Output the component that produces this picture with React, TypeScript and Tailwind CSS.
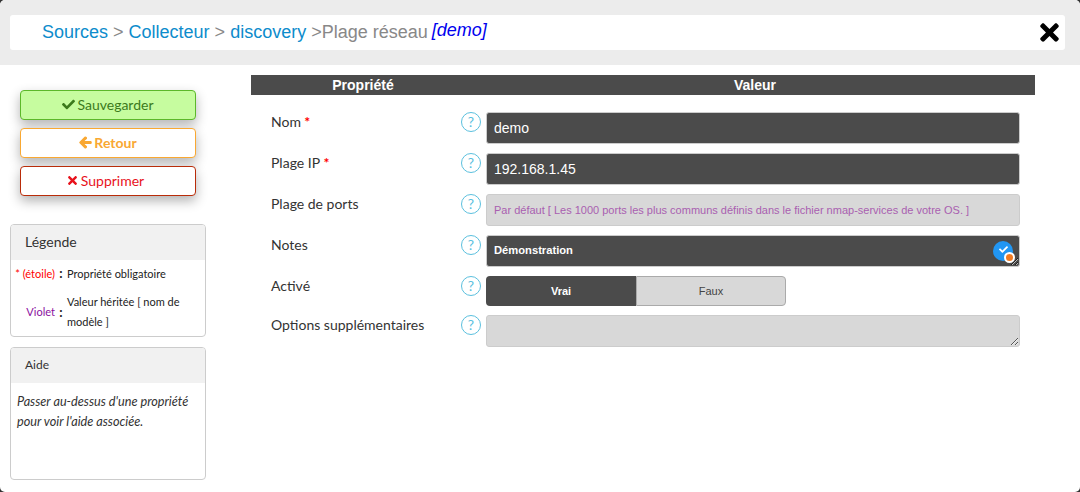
import React from 'react';
import { FaCheck, FaArrowLeft, FaTimes } from 'react-icons/fa';

const HelpIcon = () => (
  <div className="w-5 h-5 flex-shrink-0 rounded-full border-[1.5px] border-[#5bc0de] bg-white text-[#5bc0de] flex items-center justify-center text-[14px] leading-none font-['Lato',sans-serif]">
    ?
  </div>
);

const Row = ({ label, required, gap, children }: { label: string; required?: boolean; gap: string; children: React.ReactNode }) => (
  <div className={`flex ${gap}`}>
    <div className="w-[190px] pt-[1px] text-[14px] leading-[18px] text-[#333] font-['Lato',sans-serif]">
      {label}
      {required && <span className="text-[#ff0000] font-bold"> *</span>}
    </div>
    <div className="w-5 mr-[5px]">
      <HelpIcon />
    </div>
    {children}
  </div>
);

export default function App() {
  return (
    <div className="w-[1080px] h-[492px] bg-[#333333]">
      <div className="w-full h-full bg-white rounded-[5px] overflow-hidden font-['Lato',sans-serif]">
        <div className="h-[65px] bg-[#ececec] pt-[15px] px-[10px] pr-[15px]">
          <div className="relative h-[35px] bg-white rounded-[3px] pl-8 flex items-center text-[18px] font-['Liberation_Sans',sans-serif] text-[#888]">
            <span className="text-[#0d8ccc]">Sources</span>
            <span className="ml-[5px]">&gt;</span>
            <span className="ml-[5px] text-[#0d8ccc]">Collecteur</span>
            <span className="ml-[5px]">&gt;</span>
            <span className="ml-[5px] text-[#0d8ccc]">discovery</span>
            <span className="ml-[5px]">&gt;Plage réseau</span>
            <span className="ml-[4px] -mt-[5px] italic text-[18px] text-[#0000ee]">[demo]</span>
            <FaTimes className="absolute right-[2px] top-[4px] text-black" size={27} />
          </div>
        </div>

        <div className="flex">
          <div className="w-[196px] ml-[10px] flex-shrink-0">
            <div className="pt-[25px] pl-[10px] pr-[10px] flex flex-col gap-2">
              <button className="h-[30px] pb-[2px] flex items-center justify-center gap-[2px] rounded-[4px] border border-[#5cb82a] bg-[#c6fc9f] text-[14px] text-[#3c7a1c] shadow-[0_5px_12px_rgba(0,0,0,0.3)]">
                <FaCheck size={13} /> Sauvegarder
              </button>
              <button className="h-[30px] pb-[2px] flex items-center justify-center gap-[2px] rounded-[4px] border border-[#f9a832] bg-white text-[14px] font-bold text-[#f9a832] shadow-[0_5px_12px_rgba(0,0,0,0.3)]">
                <FaArrowLeft size={13} stroke="currentColor" strokeWidth={40} /> Retour
              </button>
              <button className="h-[30px] pb-[2px] pr-[6px] flex items-center justify-center gap-[2px] rounded-[4px] border border-[#b92c09] bg-white text-[14px] text-[#e8121c] shadow-[0_5px_12px_rgba(0,0,0,0.3)]">
                <FaTimes size={13} /> Supprimer
              </button>
            </div>

            <div className="mt-7 h-[113px] rounded-[4px] border border-[#cccccc] overflow-hidden">
              <div className="h-[35px] pb-[2px] bg-[#f1f1f1] pl-[14px] flex items-center text-[14px] text-[#333]">Légende</div>
              <div className="flex items-center h-[28px] text-[11px] text-[#222]">
                <span className="w-[44px] text-right text-[#ff0000] whitespace-nowrap">* (étoile)</span>
                <span className="w-[12px] text-center font-bold text-[13px]">:</span>
                <span>Propriété obligatoire</span>
              </div>
              <div className="flex items-center mt-[4px] text-[11px] leading-[20px] text-[#222]">
                <span className="w-[44px] text-right text-[#8b0f9e]">Violet</span>
                <span className="w-[12px] text-center font-bold text-[13px]">:</span>
                <span className="w-[125px]">Valeur héritée [ nom de modèle ]</span>
              </div>
            </div>

            <div className="mt-[10px] h-[133px] rounded-[4px] border border-[#cccccc] overflow-hidden">
              <div className="h-[35px] pb-[2px] bg-[#f1f1f1] pl-[14px] flex items-center text-[12px] text-[#333]">Aide</div>
              <p className="px-[6px] pt-[8px] text-[12.7px] leading-[20px] italic text-[#333]">
                Passer au-dessus d'une propriété pour voir l'aide associée.
              </p>
            </div>
          </div>

          <div className="w-[784px] ml-[45px] pt-[10px]">
            <div className="h-5 bg-[#4b4b4b] flex text-white text-[14px] font-bold font-['Liberation_Sans',sans-serif] leading-5">
              <div className="w-[224px] text-center">Propriété</div>
              <div className="w-[560px] text-center">Valeur</div>
            </div>

            <div className="pl-5 pt-[17px] flex flex-col">
              <Row label="Nom" required gap="mb-[9px]">
                <input readOnly value="demo" className="w-[534px] h-8 px-[7px] rounded-[3px] border border-[#cccccc] bg-[#4b4b4b] text-white text-[14px] font-['Liberation_Sans',sans-serif]" />
              </Row>
              <Row label="Plage IP" required gap="mb-[9px]">
                <input readOnly value="192.168.1.45" className="w-[534px] h-8 px-[7px] rounded-[3px] border border-[#cccccc] bg-[#4b4b4b] text-white text-[14px] font-['Liberation_Sans',sans-serif]" />
              </Row>
              <Row label="Plage de ports" gap="mb-[9px]">
                <input readOnly placeholder="Par défaut [ Les 1000 ports les plus communs définis dans le fichier nmap-services de votre OS. ]" className="w-[534px] h-8 px-[7px] rounded-[3px] border border-[#cccccc] bg-[#d8d8d8] text-[11px] font-['Liberation_Sans',sans-serif] placeholder:text-[#a95fb0]" />
              </Row>
              <Row label="Notes" gap="mb-[9px]">
                <div className="relative w-[534px] h-8 flex">
                  <textarea readOnly value="Démonstration" className="w-[534px] h-8 px-[7px] py-[6px] rounded-[3px] border border-[#cccccc] bg-[#4b4b4b] text-white text-[11.2px] leading-[16px] font-bold font-['Liberation_Sans',sans-serif]" />
                  <div className="absolute left-[507px] top-[6px] w-5 h-5 pb-[3px] rounded-full bg-[#2196f3] flex items-center justify-center">
                    <FaCheck size={9} className="text-white" />
                  </div>
                  <div className="absolute left-[518px] top-[17px] w-[7px] h-[7px] rounded-full bg-[#f07a22] border-2 border-white box-content" />
                </div>
              </Row>
              <Row label="Activé" gap="mb-[9px]">
                <div className="w-[300px] h-[30px] flex text-[11px] font-['Liberation_Sans',sans-serif]">
                  <div className="w-[150px] rounded-l-[4px] bg-[#4b4b4b] text-white font-bold flex items-center justify-center">Vrai</div>
                  <div className="w-[150px] rounded-r-[4px] border border-[#aaaaaa] bg-[#d8d8d8] text-[#444] flex items-center justify-center">Faux</div>
                </div>
              </Row>
              <Row label="Options supplémentaires" gap="">
                <textarea readOnly className="w-[534px] h-8 rounded-[3px] border border-[#cccccc] bg-[#d8d8d8]" />
              </Row>
            </div>
          </div>
        </div>
      </div>
    </div>
  );
}
